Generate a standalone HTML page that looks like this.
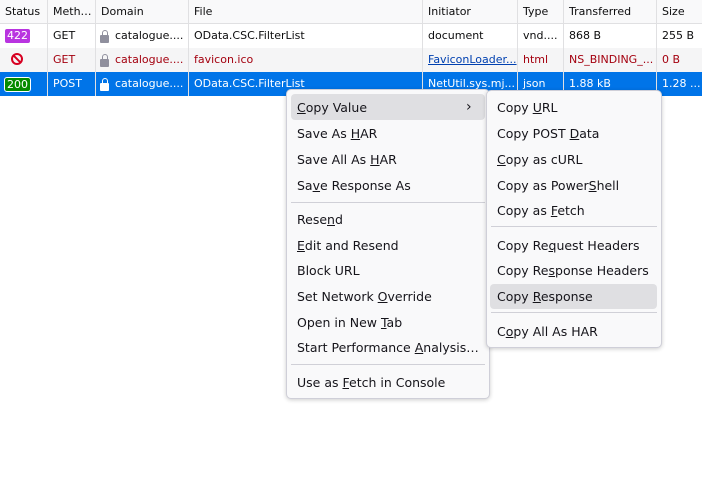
<!DOCTYPE html>
<html><head><style>
*{margin:0;padding:0;box-sizing:border-box}
body{width:702px;height:503px;background:#fff;font-family:"DejaVu Sans","Liberation Sans",sans-serif;position:relative;overflow:hidden;color:#0c0c0d}
.t{position:absolute;font-size:11px;white-space:nowrap;line-height:12px}
.row{position:absolute;left:0;width:702px;height:24px}
.vl{position:absolute;top:0;width:1px;height:96px;background:#e0e0e2}
.m{position:absolute;background:#f9f9fa;border:1px solid #cfcfd8;border-radius:5px;box-shadow:0 1px 4px rgba(0,0,0,.2)}
.i{position:absolute;font-size:12.5px;white-space:nowrap;line-height:16px;color:#15141a;margin-top:1px}
.sep{position:absolute;height:1px;background:#d0d0d7}
.hl{position:absolute;background:#dfdfe2;border-radius:4px}
.lock{position:absolute;width:9px;height:8px;border-radius:1px}
.lock:before{content:"";position:absolute;left:1.5px;top:-5px;width:6px;height:7px;border:1.5px solid;border-color:inherit;border-radius:3px 3px 0 0;box-sizing:border-box}
</style></head><body>
<div class="row" style="top:0;height:24px;background:#f9f9fa;border-bottom:1px solid #e0e0e2"></div>
<div class="row" style="top:48px;background:#f5f5f6"></div>
<div class="row" style="top:72px;background:#0074e8"></div>
<div class="vl" style="left:47px"></div><div class="vl" style="left:95px"></div><div class="vl" style="left:188px"></div><div class="vl" style="left:422px"></div><div class="vl" style="left:517px"></div><div class="vl" style="left:563px"></div><div class="vl" style="left:656px"></div>
<div class="t" style="left:5px;top:6px">Status</div><div class="t" style="left:53px;top:6px">Meth…</div><div class="t" style="left:101px;top:6px">Domain</div><div class="t" style="left:194px;top:6px">File</div><div class="t" style="left:428px;top:6px">Initiator</div><div class="t" style="left:523px;top:6px">Type</div><div class="t" style="left:569px;top:6px">Transferred</div><div class="t" style="left:662px;top:6px">Size</div>

<div class="t" style="left:5px;top:29px;background:#b934e0;color:#fff;border-radius:2px;padding:0 2px;height:14px;line-height:14px">422</div>
<div class="t" style="left:53px;top:30px">GET</div>
<div class="lock" style="left:100px;top:35px;background:#8f8f9d;border-color:#8f8f9d"></div>
<div class="t" style="left:115px;top:30px">catalogue....</div><div class="t" style="left:194px;top:30px">OData.CSC.FilterList</div><div class="t" style="left:428px;top:30px">document</div><div class="t" style="left:523px;top:30px">vnd....</div><div class="t" style="left:569px;top:30px">868 B</div><div class="t" style="left:662px;top:30px">255 B</div>

<div style="position:absolute;left:11px;top:53px;width:12px;height:12px;border:2px solid #d70022;border-radius:50%"><div style="position:absolute;left:3px;top:-1px;width:2px;height:10px;background:#d70022;transform:rotate(-45deg)"></div></div>
<div class="t" style="left:53px;top:54px;color:#a4000f">GET</div>
<div class="lock" style="left:100px;top:59px;background:#8f8f9d;border-color:#8f8f9d"></div>
<div class="t" style="left:115px;top:54px;color:#a4000f">catalogue....</div><div class="t" style="left:194px;top:54px;color:#a4000f">favicon.ico</div><div class="t" style="left:428px;top:54px;color:#0040b0;text-decoration:underline">FaviconLoader...</div><div class="t" style="left:523px;top:54px;color:#a4000f">html</div><div class="t" style="left:569px;top:54px;color:#a4000f">NS_BINDING_...</div><div class="t" style="left:662px;top:54px;color:#a4000f">0 B</div>

<div class="t" style="left:4px;top:77px;background:#058b00;color:#fff;border:1px solid #fff;border-radius:3px;padding:0 2px;height:15px;line-height:13px">200</div>
<div class="t" style="left:53px;top:78px;color:#fff">POST</div>
<div class="lock" style="left:100px;top:83px;background:#fff;border-color:#fff"></div>
<div class="t" style="left:115px;top:78px;color:#fff">catalogue....</div><div class="t" style="left:194px;top:78px;color:#fff">OData.CSC.FilterList</div><div class="t" style="left:428px;top:78px;color:#fff">NetUtil.sys.mj...</div><div class="t" style="left:523px;top:78px;color:#fff">json</div><div class="t" style="left:569px;top:78px;color:#fff">1.88 kB</div><div class="t" style="left:662px;top:78px;color:#fff">1.28 ...</div>

<div class="m" style="left:286px;top:89px;width:204px;height:310px"></div>
<div class="hl" style="left:291px;top:94px;width:194px;height:26px"></div>
<div class="i" style="left:297px;top:99px"><u>C</u>opy Value</div>
<div class="i" style="left:466px;top:98px;font-size:14px">›</div>
<div class="i" style="left:297px;top:125px">Save As <u>H</u>AR</div>
<div class="i" style="left:297px;top:151px">Save All As <u>H</u>AR</div>
<div class="i" style="left:297px;top:177px">Sa<u>v</u>e Response As</div>
<div class="sep" style="left:291px;top:202px;width:194px"></div>
<div class="i" style="left:297px;top:211px">Rese<u>n</u>d</div>
<div class="i" style="left:297px;top:237px"><u>E</u>dit and Resend</div>
<div class="i" style="left:297px;top:262px">Block URL</div>
<div class="i" style="left:297px;top:288px">Set Network <u>O</u>verride</div>
<div class="i" style="left:297px;top:314px">Open in New <u>T</u>ab</div>
<div class="i" style="left:297px;top:339px">Start Performance <u>A</u>nalysis…</div>
<div class="sep" style="left:291px;top:364px;width:194px"></div>
<div class="i" style="left:297px;top:374px">Use as <u>F</u>etch in Console</div>

<div class="m" style="left:486px;top:90px;width:176px;height:258px"></div>
<div class="i" style="left:497px;top:99px">Copy <u>U</u>RL</div>
<div class="i" style="left:497px;top:125px">Copy POST <u>D</u>ata</div>
<div class="i" style="left:497px;top:151px"><u>C</u>opy as cURL</div>
<div class="i" style="left:497px;top:177px">Copy as Power<u>S</u>hell</div>
<div class="i" style="left:497px;top:202px">Copy as <u>F</u>etch</div>
<div class="sep" style="left:491px;top:226px;width:166px"></div>
<div class="i" style="left:497px;top:237px">Copy Re<u>q</u>uest Headers</div>
<div class="i" style="left:497px;top:262px">Copy Re<u>s</u>ponse Headers</div>
<div class="hl" style="left:490px;top:284px;width:167px;height:25px"></div>
<div class="i" style="left:497px;top:288px">Copy <u>R</u>esponse</div>
<div class="sep" style="left:491px;top:312px;width:166px"></div>
<div class="i" style="left:497px;top:323px">C<u>o</u>py All As HAR</div>
</body></html>
